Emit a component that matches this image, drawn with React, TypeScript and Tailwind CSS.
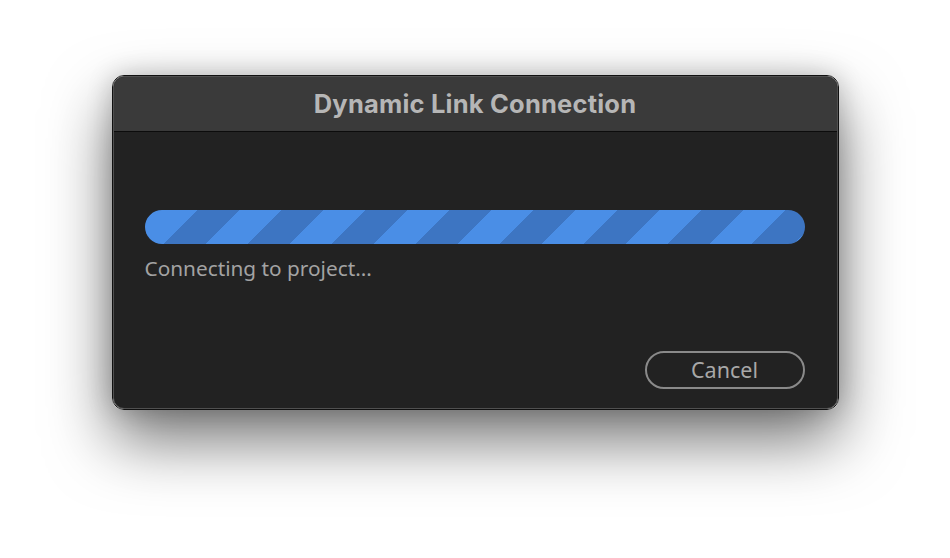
import React from "react";

export default function App() {
  return (
    <div className="w-[950px] h-[558px] bg-white overflow-hidden pt-[75px]">
      <div className="mx-auto w-[727px] h-[335px] rounded-[12px] border border-[#111111] shadow-[0_30px_64px_rgba(0,0,0,0.55),0_0_26px_rgba(0,0,0,0.2)]">
        <div className="flex flex-col h-full rounded-[11px] border border-[#505050] overflow-hidden bg-[#222222]">
          <div className="h-[55px] shrink-0 bg-[#3a3a3a] border-b border-[#0c0c0c] flex items-center justify-center">
            <span className="text-[25.5px] font-bold text-[#b6b6b6] tracking-[0.2px] font-['Inter','Liberation_Sans',sans-serif]">
              Dynamic Link Connection
            </span>
          </div>
          <div className="flex-1 flex flex-col pl-[31px] pr-[32px] pb-[19px]">
            <div className="mt-[78px] h-[34px] rounded-full bg-[repeating-linear-gradient(135deg,#3d75c2_0px,#3d75c2_7.5px,#4a8ee6_7.5px,#4a8ee6_37.2px,#3d75c2_37.2px,#3d75c2_59.4px)]" />
            <div className="mt-[10px] text-[20.8px] leading-[28px] text-[#a3a3a3] font-['Noto_Sans','Open_Sans',sans-serif]">
              Connecting to project...
            </div>
            <div className="mt-auto flex justify-end">
              <button className="w-[160px] h-[38px] rounded-full border-2 border-[#8a8a8a] text-[21.5px] leading-none text-[#a8a8a8] font-['Noto_Sans','Open_Sans',sans-serif] flex items-center justify-center">
                Cancel
              </button>
            </div>
          </div>
        </div>
      </div>
    </div>
  );
}
